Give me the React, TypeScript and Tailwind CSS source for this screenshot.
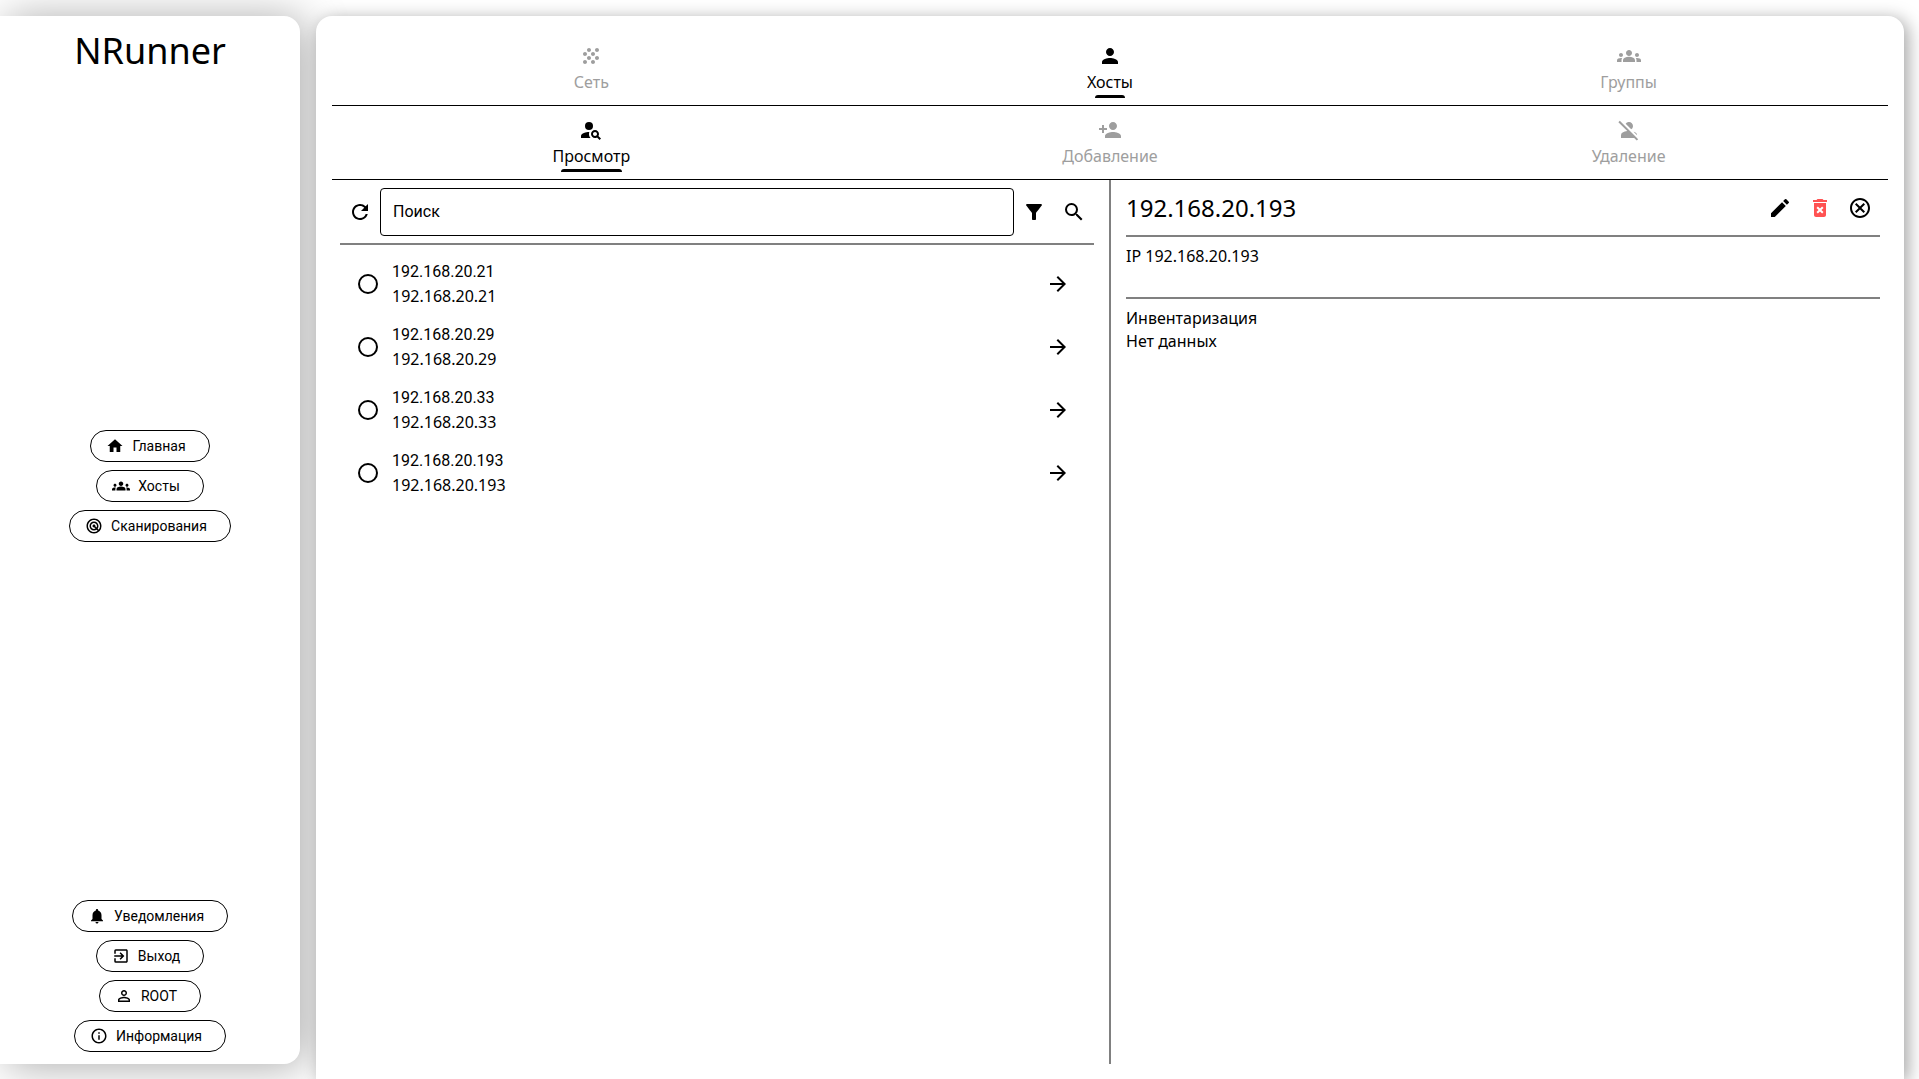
import { useState } from "react";
import type { IconType } from "react-icons";
import {
  MdArrowForward,
  MdDeleteForever,
  MdEdit,
  MdExitToApp,
  MdFilterAlt,
  MdGrain,
  MdGroups,
  MdHome,
  MdInfoOutline,
  MdNotifications,
  MdOutlineCancel,
  MdPerson,
  MdPersonAdd,
  MdPersonOff,
  MdPersonOutline,
  MdPersonSearch,
  MdRadar,
  MdRefresh,
  MdSearch,
} from "react-icons/md";

type Item = { label: string; icon: IconType };

const mainNav: Item[] = [
  { label: "Главная", icon: MdHome },
  { label: "Хосты", icon: MdGroups },
  { label: "Сканирования", icon: MdRadar },
];

const accountNav: Item[] = [
  { label: "Уведомления", icon: MdNotifications },
  { label: "Выход", icon: MdExitToApp },
  { label: "ROOT", icon: MdPersonOutline },
  { label: "Информация", icon: MdInfoOutline },
];

const sections: Item[] = [
  { label: "Сеть", icon: MdGrain },
  { label: "Хосты", icon: MdPerson },
  { label: "Группы", icon: MdGroups },
];

const actions: Item[] = [
  { label: "Просмотр", icon: MdPersonSearch },
  { label: "Добавление", icon: MdPersonAdd },
  { label: "Удаление", icon: MdPersonOff },
];

const hosts = ["192.168.20.21", "192.168.20.29", "192.168.20.33", "192.168.20.193"];

function PillList({ items }: { items: Item[] }) {
  return (
    <div className="flex flex-col items-center gap-2">
      {items.map(({ label, icon: Icon }) => (
        <button
          key={label}
          type="button"
          className="flex h-8 items-center gap-2 rounded-full border border-black pr-[23px] pl-[15px] font-['Roboto',sans-serif] text-sm"
        >
          <Icon className="size-[18px]" />
          {label}
        </button>
      ))}
    </div>
  );
}

function TabBar({ items, initial }: { items: Item[]; initial: number }) {
  const [active, setActive] = useState(initial);
  return (
    <div role="tablist" className="grid h-[74px] shrink-0 grid-cols-3 border-b border-black">
      {items.map(({ label, icon: Icon }, i) => (
        <button
          key={label}
          type="button"
          role="tab"
          aria-selected={i === active}
          onClick={() => setActive(i)}
          className={`flex flex-col items-center pt-3 ${i === active ? "text-black" : "text-[#9e9e9e]"}`}
        >
          <Icon className="size-6" />
          <span className="flex flex-col items-stretch">
            <span className="pt-0.5 leading-[25px]">{label}</span>
            <span className={`mx-2 h-[3px] rounded-t-[3px] ${i === active ? "bg-black" : "bg-transparent"}`} />
          </span>
        </button>
      ))}
    </div>
  );
}

function IconButton({ label, icon: Icon, className = "" }: Item & { className?: string }) {
  return (
    <button type="button" aria-label={label} className={`flex size-10 shrink-0 items-center justify-center ${className}`}>
      <Icon className="size-6" />
    </button>
  );
}

export default function App() {
  return (
    <div className="flex h-screen gap-4 overflow-hidden bg-white font-['Noto_Sans',sans-serif] text-base text-black antialiased">
      <aside className="mt-4 mb-[15px] flex w-[300px] shrink-0 flex-col justify-between rounded-r-2xl bg-white pt-2 pb-3 shadow-[6px_2px_44px_rgba(0,0,0,0.34)]">
        <h1 className="text-center text-4xl leading-[54px]">NRunner</h1>
        <nav aria-label="Разделы" className="pb-1.5">
          <PillList items={mainNav} />
        </nav>
        <nav aria-label="Аккаунт">
          <PillList items={accountNav} />
        </nav>
      </aside>

      <main className="mt-4 mr-[15px] flex min-w-0 flex-1 flex-col rounded-t-2xl bg-white px-4 pt-4 pb-[15px] shadow-[4px_3px_18px_rgba(0,0,0,0.36)]">
        <TabBar items={sections} initial={1} />
        <TabBar items={actions} initial={0} />

        <div className="flex min-h-0 flex-1">
          <section className="flex min-w-0 flex-1 flex-col px-2">
            <div className="flex items-center border-b-2 border-[#808080] pt-2 pb-[7px]">
              <IconButton label="Обновить" icon={MdRefresh} />
              <input
                type="text"
                aria-label="Поиск"
                placeholder="Поиск"
                className="h-12 min-w-0 flex-1 rounded border border-black px-3 pb-0.5 font-['Roboto',sans-serif] placeholder:text-black"
              />
              <IconButton label="Фильтр" icon={MdFilterAlt} />
              <IconButton label="Найти" icon={MdSearch} />
            </div>
            <ul className="flex flex-col pt-[7px]">
              {hosts.map((ip) => (
                <li key={ip} className="flex h-[63px] items-center pr-4 pl-[18px]">
                  <input
                    id={`host-${ip}`}
                    type="checkbox"
                    className="size-5 appearance-none rounded-full border-2 border-black checked:bg-black"
                  />
                  <label htmlFor={`host-${ip}`} className="flex flex-1 flex-col pl-3.5 leading-[25px]">
                    <span className="font-['Roboto',sans-serif]">{ip}</span>
                    <span>{ip}</span>
                  </label>
                  <IconButton label={`Открыть ${ip}`} icon={MdArrowForward} />
                </li>
              ))}
            </ul>
          </section>

          <div className="mx-[7px] w-0.5 shrink-0 bg-[#808080]" />

          <section className="min-w-0 flex-1 px-2">
            <header className="flex h-[57px] items-center justify-between border-b-2 border-[#808080]">
              <h2 className="text-2xl">192.168.20.193</h2>
              <div className="flex">
                <IconButton label="Изменить" icon={MdEdit} />
                <IconButton label="Удалить" icon={MdDeleteForever} className="text-[#ff5252]" />
                <IconButton label="Закрыть" icon={MdOutlineCancel} />
              </div>
            </header>
            <p className="h-[62px] border-b-2 border-[#808080] pt-2 leading-[23px]">IP 192.168.20.193</p>
            <div className="pt-2 leading-[23px]">
              <h3>Инвентаризация</h3>
              <p>Нет данных</p>
            </div>
          </section>
        </div>
      </main>
    </div>
  );
}
